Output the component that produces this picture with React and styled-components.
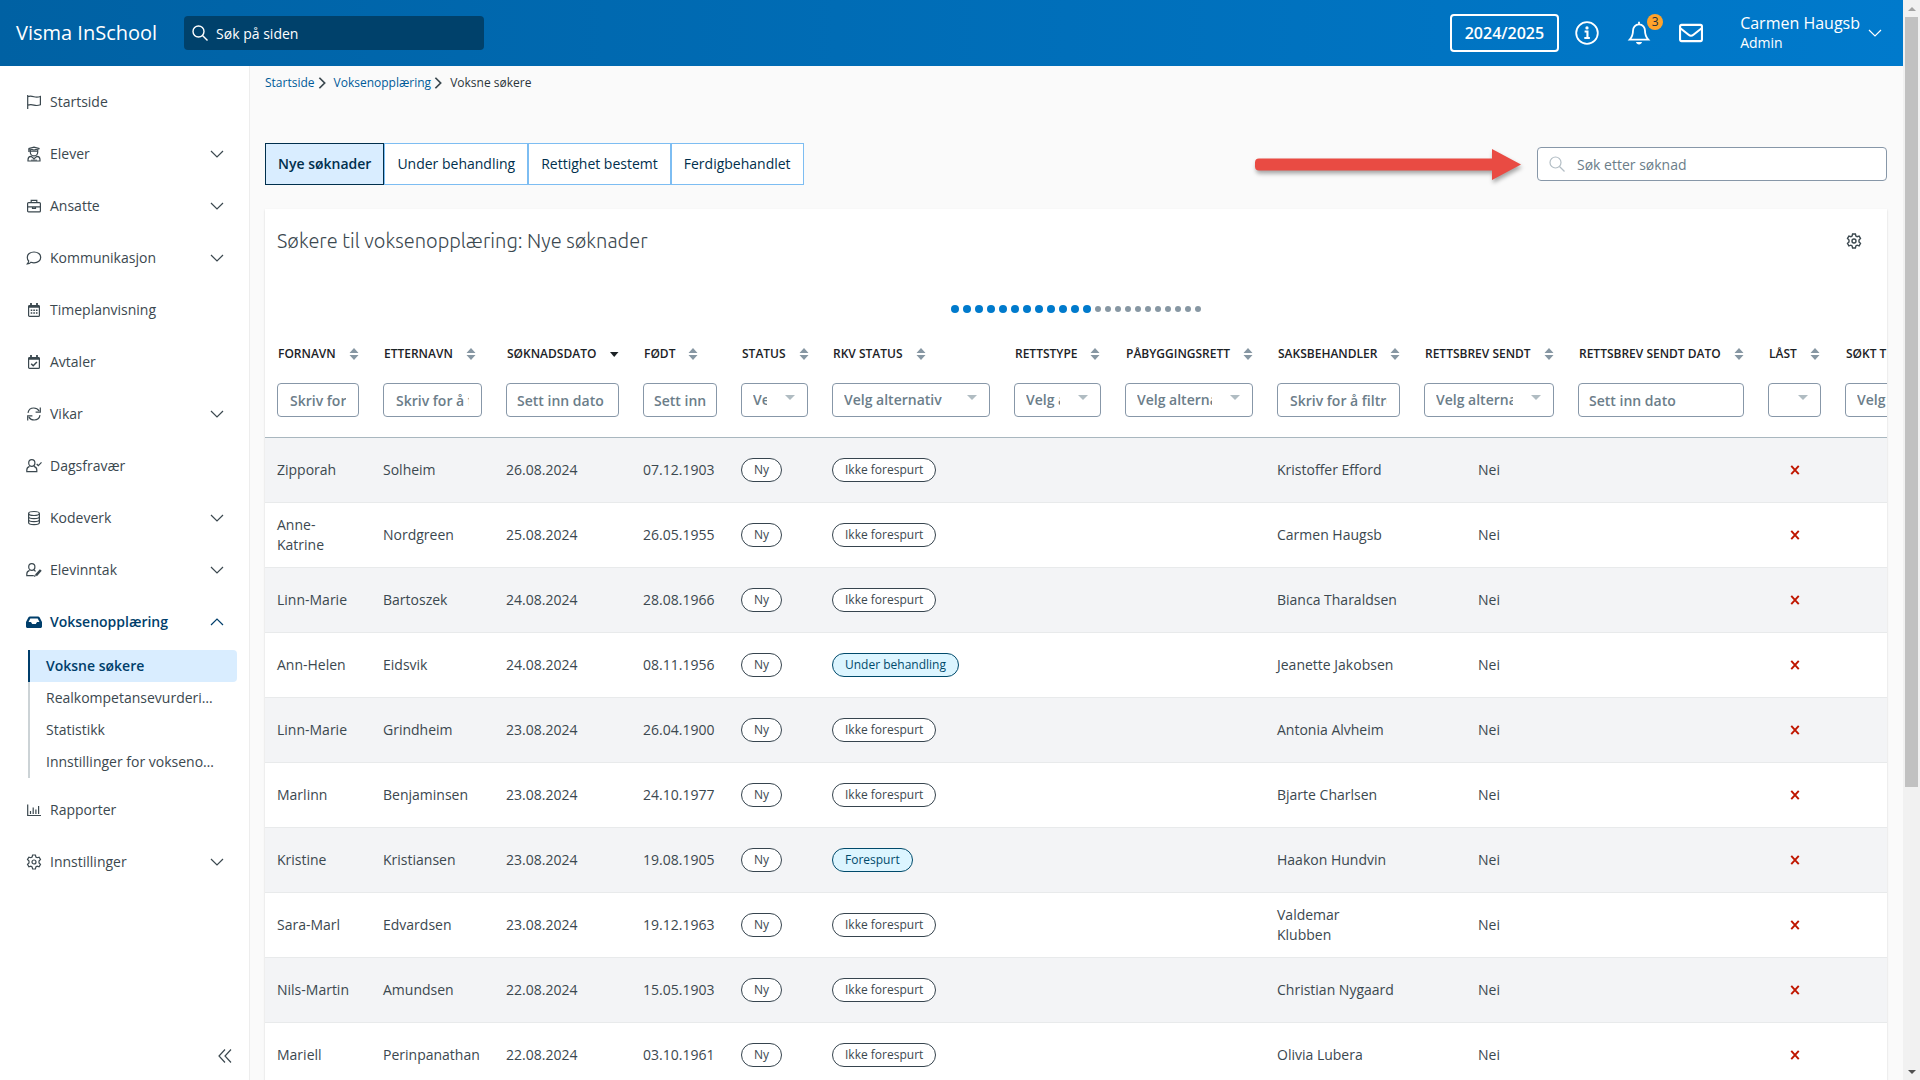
import React from "react";
import styled, { createGlobalStyle, css } from "styled-components";

const MENU = [
    { icon: "flag", label: "Startside" },
    { icon: "student", label: "Elever", expandable: true },
    { icon: "briefcase", label: "Ansatte", expandable: true },
    { icon: "comment", label: "Kommunikasjon", expandable: true },
    { icon: "calendar", label: "Timeplanvisning" },
    { icon: "calendarCheck", label: "Avtaler" },
    { icon: "sync", label: "Vikar", expandable: true },
    { icon: "userCheck", label: "Dagsfravær" },
    { icon: "database", label: "Kodeverk", expandable: true },
    { icon: "userEdit", label: "Elevinntak", expandable: true },
    {
        icon: "inbox",
        label: "Voksenopplæring",
        expandable: true,
        open: true,
        children: [
            "Voksne søkere",
            "Realkompetansevurderinger",
            "Statistikk",
            "Innstillinger for voksenopplæring",
        ],
    },
    { icon: "chart", label: "Rapporter" },
    { icon: "gear", label: "Innstillinger", expandable: true },
];

const TABS = ["Nye søknader", "Under behandling", "Rettighet bestemt", "Ferdigbehandlet"];

const COLUMNS = [
    { title: "Fornavn", width: 106, filter: "text" },
    { title: "Etternavn", width: 123, filter: "text" },
    { title: "Søknadsdato", width: 137, filter: "date", sorted: true },
    { title: "Født", width: 98, filter: "date" },
    { title: "Status", width: 91, filter: "select" },
    { title: "RKV status", width: 182, filter: "select" },
    { title: "Rettstype", width: 111, filter: "select" },
    { title: "Påbyggingsrett", width: 152, filter: "select" },
    { title: "Saksbehandler", width: 147, filter: "text" },
    { title: "Rettsbrev sendt", width: 154, filter: "select" },
    { title: "Rettsbrev sendt dato", width: 190, filter: "date" },
    { title: "Låst", width: 77, filter: "select" },
    { title: "Søkt til", width: 151, filter: "select" },
];

const ROWS = [
    ["Zipporah", "Solheim", "26.08.2024", "07.12.1903", "Ikke forespurt", "Kristoffer Efford"],
    ["Anne-Katrine", "Nordgreen", "25.08.2024", "26.05.1955", "Ikke forespurt", "Carmen Haugsb"],
    ["Linn-Marie", "Bartoszek", "24.08.2024", "28.08.1966", "Ikke forespurt", "Bianca Tharaldsen"],
    ["Ann-Helen", "Eidsvik", "24.08.2024", "08.11.1956", "Under behandling", "Jeanette Jakobsen"],
    ["Linn-Marie", "Grindheim", "23.08.2024", "26.04.1900", "Ikke forespurt", "Antonia Alvheim"],
    ["Marlinn", "Benjaminsen", "23.08.2024", "24.10.1977", "Ikke forespurt", "Bjarte Charlsen"],
    ["Kristine", "Kristiansen", "23.08.2024", "19.08.1905", "Forespurt", "Haakon Hundvin"],
    ["Sara-Marl", "Edvardsen", "23.08.2024", "19.12.1963", "Ikke forespurt", "Valdemar\nKlubben"],
    ["Nils-Martin", "Amundsen", "22.08.2024", "15.05.1903", "Ikke forespurt", "Christian Nygaard"],
    ["Mariell", "Perinpanathan", "22.08.2024", "03.10.1961", "Ikke forespurt", "Olivia Lubera"],
];

const GEAR =
    "M6.6 1h2.8l.5 2 1.2.7 2-.6 1.4 2.4-1.5 1.5v1.9l1.5 1.5-1.4 2.4-2-.6-1.2.7-.5 2.1H6.6l-.5-2.1-1.2-.7-2 .6-1.4-2.4L3 8.900V7L1.500 5.500l1.400-2.400 2 .6L6.100 3z";

const icons = {
    flag: <path d="M1.700 1v14M1.700 2.700c2.300-.9 4.300-.5 6.200.1 2 .6 4.200.6 6.500-.3v8.300c-2.300.9-4.500.9-6.500.3-1.900-.6-3.900-.8-6.200.1" />,
    student: (
        <>
            <path d="M2.500 2.600 8 1.200l5.500 1.400L8 4z" />
            <path d="M4.300 3.500v2.700a3.700 3.700 0 0 0 7.400 0V3.500M2.900 3v3M4.300 5.200h7.400" />
            <path d="M2 15v-1.300c0-1.900 1.400-3.200 3-3.300l3 2.400 3-2.400c1.600.1 3 1.400 3 3.300V15zM6 15v-1.500M10 15v-1.500M8 13v2" />
        </>
    ),
    briefcase: (
        <>
            <rect x="1.600" y="4.600" width="12.800" height="9.300" rx="1" />
            <path d="M5.200 4.500V2.300h5.600v2.200M1.600 8.800h12.800M6.500 9h3v1.300h-3z" />
        </>
    ),
    comment: <path d="M8 2c3.900 0 6.700 2.400 6.700 5.400S11.900 12.800 8 12.800c-1.100 0-2.200-.2-3.100-.5-1 1-2.200 1.500-3.600 1.600.8-.9 1.300-1.800 1.400-2.900-.9-.9-1.400-2.200-1.400-3.600C1.300 4.400 4.100 2 8 2z" />,
    calendar: (
        <>
            <rect x="2.600" y="3.600" width="10.800" height="10.800" rx="1" />
            <path d="M2.600 4.500h10.800" strokeWidth="2.500" />
            <path d="M5 1v3M11 1v3" strokeWidth="1.800" />
            <path d="M4.700 8.200h6.800M4.700 11h6.800" strokeWidth="1.500" strokeDasharray="1.600 1" />
        </>
    ),
    calendarCheck: (
        <>
            <rect x="2.600" y="3.600" width="10.800" height="10.800" rx="1" />
            <path d="M2.600 4.500h10.800" strokeWidth="2.500" />
            <path d="M5 1v3M11 1v3" strokeWidth="1.800" />
            <path d="m5.200 9.700 2 2 3.700-3.800" strokeWidth="1.500" />
        </>
    ),
    sync: (
        <path d="M2 6.800C2.500 4 4.900 2 7.800 2c2.300 0 4.100 1 5.300 2.900M14.300 1.500v4.700H9.600M14 9.200c-.5 2.800-2.900 4.800-5.800 4.800-2.300 0-4.100-1-5.300-2.900M1.700 14.500V9.800h4.700" />
    ),
    userCheck: (
        <>
            <ellipse cx="5.800" cy="5" rx="3.100" ry="3.400" />
            <path d="M3.600 8.400C1.700 9 .8 10.200.8 12v1.700h10V12c0-1.800-.9-3-2.800-3.600M10.700 6l1.600 1.600 3.200-3.200" />
        </>
    ),
    userEdit: (
        <>
            <ellipse cx="5.800" cy="5" rx="3.100" ry="3.400" />
            <path d="M3.600 8.400C1.700 9 .8 10.200.8 12v1.700h7M8 8.400c.7.200 1.200.500 1.600.9" />
            <path d="m10 13.300 4.800-5.300" strokeWidth="2.500" />
            <path d="m8.500 14.800.8-1.900" />
        </>
    ),
    database: (
        <>
            <ellipse cx="8" cy="3.500" rx="5.400" ry="2" />
            <path d="M2.600 3.500v9c0 1.200 2.400 2.100 5.400 2.100s5.400-.9 5.400-2.100v-9M2.600 6.500c0 1.200 2.400 2.100 5.400 2.100s5.400-.9 5.400-2.100M2.600 9.500c0 1.200 2.400 2.100 5.400 2.100s5.400-.9 5.400-2.100" />
        </>
    ),
    inbox: (
        <path
            fillRule="evenodd"
            fill="currentColor"
            stroke="none"
            d="M4 2.500h8c.7 0 1.300.3 1.700.9L16 8v4.500c0 .9-.7 1.500-1.500 1.500h-13C.7 14 0 13.400 0 12.500V8l2.300-4.600c.4-.6 1-.9 1.700-.9zM4.300 4.500 2.500 8H5l1.200 2h3.600L11 8h2.500l-1.800-3.500z"
        />
    ),
    chart: <path d="M1.700 2.500v11H15M4.500 9v3M7.200 5.500V12M9.900 7.500V12M12.600 4v8" />,
    gear: (
        <>
            <path d={GEAR} />
            <circle cx="8" cy="8" r="2" />
        </>
    ),
    search: (
        <>
            <circle cx="6.500" cy="6.500" r="5.500" />
            <path d="m10.500 10.500 5 5" />
        </>
    ),
    chevronDown: <path d="m2 5 6 6 6-6" />,
    chevronUp: <path d="m2 11 6-6 6 6" />,
    chevronRight: <path d="m5 2 6 6-6 6" />,
    collapse: <path d="M8 1.500 2 8l6 6.500M14 1.500 8 8l6 6.500" />,
    info: (
        <>
            <circle cx="8" cy="8" r="7.200" />
            <path d="M6.400 7h1.900v4M6.200 11.300h3.700" strokeWidth="1.400" />
            <circle cx="8" cy="4.600" r="1.100" fill="currentColor" stroke="none" />
        </>
    ),
    bell: (
        <>
            <path d="M8 2.300c-2.500 0-4 1.900-4 4.200 0 3.300-.8 4.400-2.200 5.900h12.400C12.800 10.900 12 9.800 12 6.500c0-2.300-1.500-4.200-4-4.200zM8 .5v1.800" />
            <path d="M6 14h4c-.2 1-1 1.700-2 1.700S6.200 15 6 14z" fill="currentColor" stroke="none" />
        </>
    ),
    mail: (
        <>
            <rect x=".7" y="2.600" width="14.600" height="10.800" rx="1" />
            <path d="m.9 4.800 5.500 4.400c1 .8 2.200.8 3.200 0l5.500-4.400" />
        </>
    ),
    cross: <path d="m3 2.500 10 11M13 2.500l-10 11" />,
};

const Icon = ({ name, size = 16, stroke = 1.2 }) => (
    <svg
        width={size}
        height={size}
        viewBox="0 0 16 16"
        fill="none"
        stroke="currentColor"
        strokeWidth={stroke}
        aria-hidden="true"
    >
        {icons[name]}
    </svg>
);

const SortIcon = ({ sorted }) => (
    <svg width="10" height="12" viewBox="0 0 10 12" aria-hidden="true">
        {sorted ? (
            <path d="M1 4h8.500L5.200 9z" fill="#1c2226" />
        ) : (
            <path d="M5 0l4.500 5h-9zM5 12l4.500-5h-9z" fill="#8797a3" />
        )}
    </svg>
);

const Filter = ({ column }) => {
    const label = `Filter ${column.title}`;
    if (column.filter === "select") {
        return (
            <SelectWrap>
                <FilterSelect aria-label={label}>
                    <option>Velg alternativ</option>
                </FilterSelect>
            </SelectWrap>
        );
    }
    const isDate = column.filter === "date";
    return (
        <FilterInput
            type="text"
            aria-label={label}
            $date={isDate}
            placeholder={isDate ? "Sett inn dato" : "Skriv for å filtrere"}
        />
    );
};

const Sidebar = () => (
    <SideNav aria-label="Hovedmeny">
        <MenuList>
            {MENU.map((item) => (
                <li key={item.label}>
                    <MenuItem type="button" $active={item.open} aria-expanded={item.expandable ? !!item.open : undefined}>
                        <Icon name={item.icon} />
                        <span>{item.label}</span>
                        {item.expandable && <Icon name={item.open ? "chevronUp" : "chevronDown"} />}
                    </MenuItem>
                    {item.children && (
                        <SubMenu>
                            {item.children.map((child, i) => (
                                <li key={child}>
                                    <SubLink href="#" $active={i === 0}>
                                        {child}
                                    </SubLink>
                                </li>
                            ))}
                        </SubMenu>
                    )}
                </li>
            ))}
        </MenuList>
        <CollapseButton type="button" aria-label="Skjul meny">
            <Icon name="collapse" />
        </CollapseButton>
    </SideNav>
);

const TopBar = () => (
    <Header>
        <Brand href="#">Visma InSchool</Brand>
        <SiteSearch>
            <Icon name="search" stroke={1.4} />
            <input type="search" aria-label="Søk på siden" placeholder="Søk på siden" />
        </SiteSearch>
        <YearButton type="button">2024/2025</YearButton>
        <HeaderIcons>
            <HeaderButton type="button" aria-label="Informasjon">
                <Icon name="info" size={24} />
            </HeaderButton>
            <HeaderButton type="button" aria-label="Varsler">
                <Icon name="bell" size={24} />
                <Count>3</Count>
            </HeaderButton>
            <HeaderButton type="button" aria-label="Meldinger">
                <Icon name="mail" size={24} stroke={1.4} />
            </HeaderButton>
        </HeaderIcons>
        <UserButton type="button">
            <span>
                <UserName>Carmen Haugsb</UserName>
                <UserRole>Admin</UserRole>
            </span>
            <Icon name="chevronDown" />
        </UserButton>
    </Header>
);

const ApplicantTable = () => (
    <TableScroll>
        <Table>
            <colgroup>
                {COLUMNS.map((c) => (
                    <col key={c.title} style={{ width: c.width }} />
                ))}
            </colgroup>
            <thead>
                <tr>
                    {COLUMNS.map((c) => (
                        <HeadCell key={c.title} scope="col" aria-sort={c.sorted ? "descending" : undefined}>
                            <SortButton type="button">
                                {c.title}
                                <SortIcon sorted={c.sorted} />
                            </SortButton>
                        </HeadCell>
                    ))}
                </tr>
                <tr>
                    {COLUMNS.map((c) => (
                        <FilterCell key={c.title}>
                            <Filter column={c} />
                        </FilterCell>
                    ))}
                </tr>
            </thead>
            <tbody>
                {ROWS.map(([first, last, date, born, rkv, handler]) => (
                    <Row key={first + last}>
                        <Cell>{first}</Cell>
                        <Cell>{last}</Cell>
                        <Cell>{date}</Cell>
                        <Cell>{born}</Cell>
                        <Cell>
                            <Tag>Ny</Tag>
                        </Cell>
                        <Cell>
                            <Tag $info={rkv !== "Ikke forespurt"}>{rkv}</Tag>
                        </Cell>
                        <Cell />
                        <Cell />
                        <Cell>{handler}</Cell>
                        <Cell $center>Nei</Cell>
                        <Cell />
                        <LockCell $center>
                            <Icon name="cross" size={12} stroke={2.6} />
                        </LockCell>
                        <Cell />
                    </Row>
                ))}
            </tbody>
        </Table>
    </TableScroll>
);

const PointerArrow = () => (
    <ArrowSvg width="270" height="42" viewBox="0 0 270 42" aria-hidden="true">
        <path d="M6 15.500h233V6l29 15.500L239 37v-9.500H6a4 4 0 0 1-4-4v-4a4 4 0 0 1 4-4z" fill="#e94b43" />
    </ArrowSvg>
);

const App = () => (
    <>
        <GlobalStyle />
        <Shell>
            <Page>
                <TopBar />
                <Body>
                    <Sidebar />
                    <Content>
                        <Breadcrumb aria-label="Brødsmuler">
                            <a href="#">Startside</a>
                            <Icon name="chevronRight" size={14} stroke={2} />
                            <a href="#">Voksenopplæring</a>
                            <Icon name="chevronRight" size={14} stroke={2} />
                            <span>Voksne søkere</span>
                        </Breadcrumb>
                        <Toolbar>
                            <TabList role="tablist">
                                {TABS.map((tab, i) => (
                                    <Tab key={tab} type="button" role="tab" aria-selected={i === 0} $active={i === 0}>
                                        {tab}
                                    </Tab>
                                ))}
                            </TabList>
                            <PointerArrow />
                            <ListSearch>
                                <Icon name="search" />
                                <input type="search" aria-label="Søk etter søknad" placeholder="Søk etter søknad" />
                            </ListSearch>
                        </Toolbar>
                        <Card>
                            <CardHead>
                                <h1>Søkere til voksenopplæring: Nye søknader</h1>
                                <PlainButton type="button" aria-label="Tabellinnstillinger">
                                    <Icon name="gear" stroke={1.4} />
                                </PlainButton>
                            </CardHead>
                            <Dots>
                                {Array.from({ length: 23 }, (_, i) => (
                                    <Dot key={i} $on={i < 12} />
                                ))}
                            </Dots>
                            <ApplicantTable />
                        </Card>
                    </Content>
                </Body>
            </Page>
            <ScrollBar aria-hidden="true">
                <ScrollArrow $up />
                <ScrollTrack>
                    <ScrollThumb />
                </ScrollTrack>
                <ScrollArrow />
            </ScrollBar>
        </Shell>
    </>
);

const GlobalStyle = createGlobalStyle`
    * {
        box-sizing: border-box;
    }

    body {
        margin: 0;
        background: #fafafa;
        color: #3b484f;
        font-family: "Open Sans", "Noto Sans", sans-serif;
        font-size: 14px;
        line-height: 20px;
    }

    button, input, select {
        font: inherit;
        color: inherit;
    }

    ul {
        list-style: none;
        margin: 0;
        padding: 0;
    }

    svg {
        flex: none;
        display: block;
    }
`;

const Shell = styled.div`
    display: flex;
    height: 100vh;
    overflow: hidden;
`;

const Page = styled.div`
    flex: 1;
    min-width: 0;
    display: flex;
    flex-direction: column;
`;

const Header = styled.header`
    flex: none;
    height: 66px;
    padding: 0 20px 0 16px;
    display: flex;
    align-items: center;
    color: #fff;
    background: linear-gradient(90deg, #0061a3, #007acc);
`;

const Brand = styled.a`
    color: inherit;
    font-size: 20px;
    line-height: 28px;
    text-decoration: none;
    white-space: nowrap;
`;

const SiteSearch = styled.label`
    display: flex;
    align-items: center;
    gap: 8px;
    width: 300px;
    height: 34px;
    margin-left: 27px;
    padding: 0 8px;
    border-radius: 4px;
    background: #00416b;

    input {
        flex: 1;
        min-width: 0;
        padding: 2px 0 0;
        border: 0;
        outline: 0;
        background: none;
    }

    input::placeholder {
        color: #fff;
        opacity: 1;
    }
`;

const YearButton = styled.button`
    height: 38px;
    margin-left: auto;
    padding: 0 13px;
    border: 2px solid #fff;
    border-radius: 4px;
    background: none;
    font-size: 16px;
    font-weight: 600;
`;

const HeaderIcons = styled.div`
    display: flex;
    gap: 28px;
    margin: 0 37px 0 16px;
`;

const PlainButton = styled.button`
    display: flex;
    padding: 0;
    border: 0;
    background: none;
    cursor: pointer;
`;

const HeaderButton = styled(PlainButton)`
    position: relative;
`;

const Count = styled.span`
    position: absolute;
    top: -7px;
    right: -12px;
    width: 16px;
    border-radius: 8px;
    background: #ffa32b;
    color: #23303a;
    font-size: 12px;
    line-height: 16px;
    text-align: center;
`;

const UserButton = styled(PlainButton)`
    align-items: center;
    gap: 7px;
    text-align: left;
`;

const UserName = styled.span`
    display: block;
    font-size: 16px;
`;

const UserRole = styled.span`
    display: block;
`;

const Body = styled.div`
    flex: 1;
    min-height: 0;
    display: flex;
`;

const SideNav = styled.nav`
    flex: none;
    width: 250px;
    padding: 10px 12px 16px 26px;
    display: flex;
    flex-direction: column;
    justify-content: space-between;
    border-right: 1px solid #ededed;
    background: #fff;
`;

const MenuList = styled.ul`
    display: block;
`;

const MenuItem = styled.button`
    display: flex;
    align-items: center;
    gap: 8px;
    width: 100%;
    height: 52px;
    padding: 0 12px 0 0;
    border: 0;
    background: none;
    text-align: left;
    cursor: pointer;
    color: ${({ $active }) => ($active ? "#003e6b" : "inherit")};
    font-weight: ${({ $active }) => ($active ? 600 : 400)};

    span {
        flex: 1;
    }
`;

const SubMenu = styled.ul`
    margin: 2px 0 6px 2px;
`;

const SubLink = styled.a`
    display: block;
    padding: 6px 18px 6px 16px;
    border-left: 2px solid #ccd3d6;
    border-radius: 0 4px 4px 0;
    color: inherit;
    text-decoration: none;
    overflow: hidden;
    text-overflow: ellipsis;
    white-space: nowrap;

    ${({ $active }) =>
        $active &&
        css`
            border-left-color: #003e6b;
            background: #d9edff;
            color: #003e6b;
            font-weight: 600;
        `}
`;

const CollapseButton = styled(PlainButton)`
    align-self: flex-end;
    margin-right: 4px;
`;

const Content = styled.main`
    flex: 1;
    min-width: 0;
    padding: 9px 16px 0 15px;
`;

const Breadcrumb = styled.nav`
    display: flex;
    align-items: center;
    font-size: 12px;
    line-height: 16px;

    a {
        color: #005b99;
        text-decoration: none;
    }

    svg {
        margin-right: 5px;
    }

    span {
        color: #2b343a;
        font-weight: 500;
    }
`;

const Toolbar = styled.div`
    display: flex;
    align-items: center;
    margin: 52px 0 24px;
`;

const TabList = styled.div`
    display: flex;
`;

const Tab = styled.button`
    height: 42px;
    padding: 0 12px;
    border: 1px solid #7dbdf2;
    background: #fff;
    color: #002f4d;
    white-space: nowrap;

    ${({ $active }) =>
        $active &&
        css`
            border-color: #002f4d;
            background: #d9edff;
            font-weight: 600;
        `}
`;

const ArrowSvg = styled.svg`
    margin: 0 14px 0 auto;
    overflow: visible;
    filter: drop-shadow(1px 3px 2px rgba(0, 0, 0, 0.35));
`;

const ListSearch = styled.label`
    display: flex;
    align-items: center;
    gap: 12px;
    width: 350px;
    height: 34px;
    padding: 0 12px 0 11px;
    border: 1px solid #8797a8;
    border-radius: 4px;
    background: #fff;
    color: #b3bec5;

    input {
        flex: 1;
        min-width: 0;
        padding: 2px 0 0;
        border: 0;
        outline: 0;
        background: none;
        color: #3b484f;
    }

    input::placeholder {
        color: #6b7d89;
        opacity: 1;
    }
`;

const Card = styled.section`
    min-height: 100%;
    background: #fff;
    box-shadow: 0 1px 2px rgba(0, 0, 0, 0.15);
`;

const CardHead = styled.div`
    display: flex;
    align-items: center;
    justify-content: space-between;
    padding: 20px 25px 0 12px;

    h1 {
        margin: 0;
        font-family: Ubuntu, "Open Sans", sans-serif;
        font-size: 20px;
        font-weight: 300;
        line-height: 24px;
    }
`;

const Dots = styled.div`
    display: flex;
    align-items: center;
    justify-content: center;
    gap: 4px;
    margin: 52px 0 24px;
`;

const Dot = styled.i`
    width: ${({ $on }) => ($on ? 8 : 6)}px;
    height: ${({ $on }) => ($on ? 8 : 6)}px;
    border-radius: 50%;
    background: ${({ $on }) => ($on ? "#007acc" : "#8797a3")};
`;

const TableScroll = styled.div`
    overflow: hidden;
`;

const Table = styled.table`
    width: 1719px;
    table-layout: fixed;
    border-collapse: collapse;
`;

const HeadCell = styled.th`
    height: 34px;
    padding: 0 0 0 13px;
    text-align: left;
`;

const SortButton = styled(PlainButton)`
    align-items: center;
    gap: 13px;
    color: #1c2226;
    font-size: 12px;
    font-weight: 600;
    line-height: 16px;
    text-transform: uppercase;
    white-space: nowrap;
`;

const FilterCell = styled.td`
    padding: 12px 12px 20px;
    border-bottom: 1px solid #a9b7bf;
`;

const field = css`
    display: block;
    width: 100%;
    height: 34px;
    border: 1px solid #8797a8;
    border-radius: 4px;
    background: #fff;
    color: #6b7d89;
    font-weight: 600;
`;

const FilterInput = styled.input`
    ${field}
    padding: 0 ${({ $date }) => ($date ? 10 : 12)}px;

    &::placeholder {
        color: inherit;
        opacity: 1;
    }
`;

const SelectWrap = styled.div`
    position: relative;

    &::after {
        content: "";
        position: absolute;
        top: 12px;
        right: 13px;
        border: 5px solid transparent;
        border-top-color: #b0bcc2;
        border-bottom: 0;
        pointer-events: none;
    }
`;

const FilterSelect = styled.select`
    ${field}
    appearance: none;
    padding: 0 40px 0 11px;
`;

const Row = styled.tr`
    border-bottom: 1px solid #e8eaeb;

    &:nth-child(odd) {
        background: #f3f4f6;
    }
`;

const Cell = styled.td`
    height: 65px;
    padding: 0 12px;
    text-align: ${({ $center }) => ($center ? "center" : "left")};
    white-space: pre-line;
`;

const LockCell = styled(Cell)`
    color: #bf1600;

    svg {
        margin: 0 auto;
    }
`;

const Tag = styled.span`
    display: inline-block;
    padding: 3px 12px;
    border: 1px solid ${({ $info }) => ($info ? "#004a6b" : "#36444e")};
    border-radius: 12px;
    background: ${({ $info }) => ($info ? "#dcf5ff" : "#fff")};
    color: ${({ $info }) => ($info ? "#004a6b" : "inherit")};
    font-size: 12px;
    line-height: 16px;
    white-space: nowrap;
`;

const ScrollBar = styled.div`
    flex: none;
    width: 17px;
    display: flex;
    flex-direction: column;
    background: #f1f1f1;
`;

const ScrollArrow = styled.div`
    height: 17px;
    display: flex;
    align-items: center;
    justify-content: center;

    &::before {
        content: "";
        border: 4px solid transparent;
        ${({ $up }) =>
            $up
                ? "border-top: 0; border-bottom-color: #a3a3a3;"
                : "border-bottom: 0; border-top-color: #505050;"}
    }
`;

const ScrollTrack = styled.div`
    flex: 1;
    padding: 0 2px;
`;

const ScrollThumb = styled.div`
    height: 73.6%;
    background: #c1c1c1;
`;

export default App;
